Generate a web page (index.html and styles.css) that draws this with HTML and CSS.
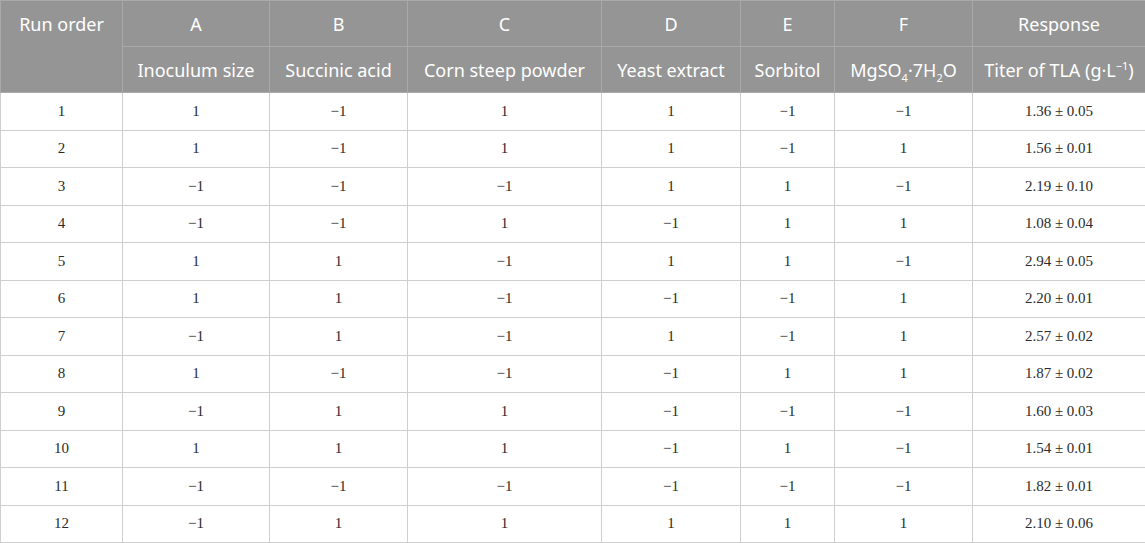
FILE: index.html
```html
<!DOCTYPE html>
<html>
<head>
<meta charset="utf-8">
<link rel="stylesheet" href="styles.css">
</head>
<body>
<table class="doe">
  <colgroup>
    <col class="c0"><col class="c1"><col class="c2"><col class="c3"><col class="c4"><col class="c5"><col class="c6"><col class="c7">
  </colgroup>
  <thead>
    <tr class="h1">
      <th rowspan="2" class="top">Run order</th>
      <th>A</th><th>B</th><th>C</th><th>D</th><th>E</th><th>F</th><th>Response</th>
    </tr>
    <tr class="h2">
      <th>Inoculum size</th><th>Succinic acid</th><th>Corn steep powder</th><th>Yeast extract</th><th>Sorbitol</th><th>MgSO<sub>4</sub>·7H<sub>2</sub>O</th><th>Titer of TLA (g·L<sup>−1</sup>)</th>
    </tr>
  </thead>
  <tbody>
    <tr><td>1</td><td>1</td><td>−1</td><td>1</td><td>1</td><td>−1</td><td>−1</td><td>1.36 ± 0.05</td></tr>
    <tr><td>2</td><td>1</td><td>−1</td><td>1</td><td>1</td><td>−1</td><td>1</td><td>1.56 ± 0.01</td></tr>
    <tr><td>3</td><td>−1</td><td>−1</td><td>−1</td><td>1</td><td>1</td><td>−1</td><td>2.19 ± 0.10</td></tr>
    <tr><td>4</td><td>−1</td><td>−1</td><td>1</td><td>−1</td><td>1</td><td>1</td><td>1.08 ± 0.04</td></tr>
    <tr><td>5</td><td>1</td><td>1</td><td>−1</td><td>1</td><td>1</td><td>−1</td><td>2.94 ± 0.05</td></tr>
    <tr><td>6</td><td>1</td><td>1</td><td>−1</td><td>−1</td><td>−1</td><td>1</td><td>2.20 ± 0.01</td></tr>
    <tr><td>7</td><td>−1</td><td>1</td><td>−1</td><td>1</td><td>−1</td><td>1</td><td>2.57 ± 0.02</td></tr>
    <tr><td>8</td><td>1</td><td>−1</td><td>−1</td><td>−1</td><td>1</td><td>1</td><td>1.87 ± 0.02</td></tr>
    <tr><td>9</td><td>−1</td><td>1</td><td>1</td><td>−1</td><td>−1</td><td>−1</td><td>1.60 ± 0.03</td></tr>
    <tr><td>10</td><td>1</td><td>1</td><td>1</td><td>−1</td><td>1</td><td>−1</td><td>1.54 ± 0.01</td></tr>
    <tr><td>11</td><td>−1</td><td>−1</td><td>−1</td><td>−1</td><td>−1</td><td>−1</td><td>1.82 ± 0.01</td></tr>
    <tr><td>12</td><td>−1</td><td>1</td><td>1</td><td>1</td><td>1</td><td>1</td><td>2.10 ± 0.06</td></tr>
  </tbody>
</table>
</body>
</html>
```
FILE: styles.css
```css
html, body {
  margin: 0;
  padding: 0;
  background: #ffffff;
}
.doe {
  width: 1145px;
  border-collapse: collapse;
  table-layout: fixed;
}
.c0 { width: 122px; }
.c1 { width: 147px; }
.c2 { width: 138px; }
.c3 { width: 194px; }
.c4 { width: 139px; }
.c5 { width: 94px; }
.c6 { width: 138px; }
.c7 { width: 173px; }
.doe th {
  background: #959595;
  color: #ffffff;
  font-family: "Noto Sans", "Open Sans", sans-serif;
  font-weight: normal;
  font-size: 18px;
  line-height: 24px;
  height: 45px;
  padding: 0;
  text-align: center;
  vertical-align: middle;
  border: 1px solid #a9a9a9;
  white-space: nowrap;
}
.doe th.top {
  vertical-align: top;
  padding-top: 11px;
}
.doe sub, .doe sup {
  font-size: 11px;
  line-height: 0;
}
.doe td {
  font-family: "Liberation Serif", "Times New Roman", serif;
  font-size: 15px;
  color: #2b2b2b;
  height: 36.5px;
  padding: 0;
  text-align: center;
  vertical-align: middle;
  border: 1px solid #cfcfcf;
}
```
